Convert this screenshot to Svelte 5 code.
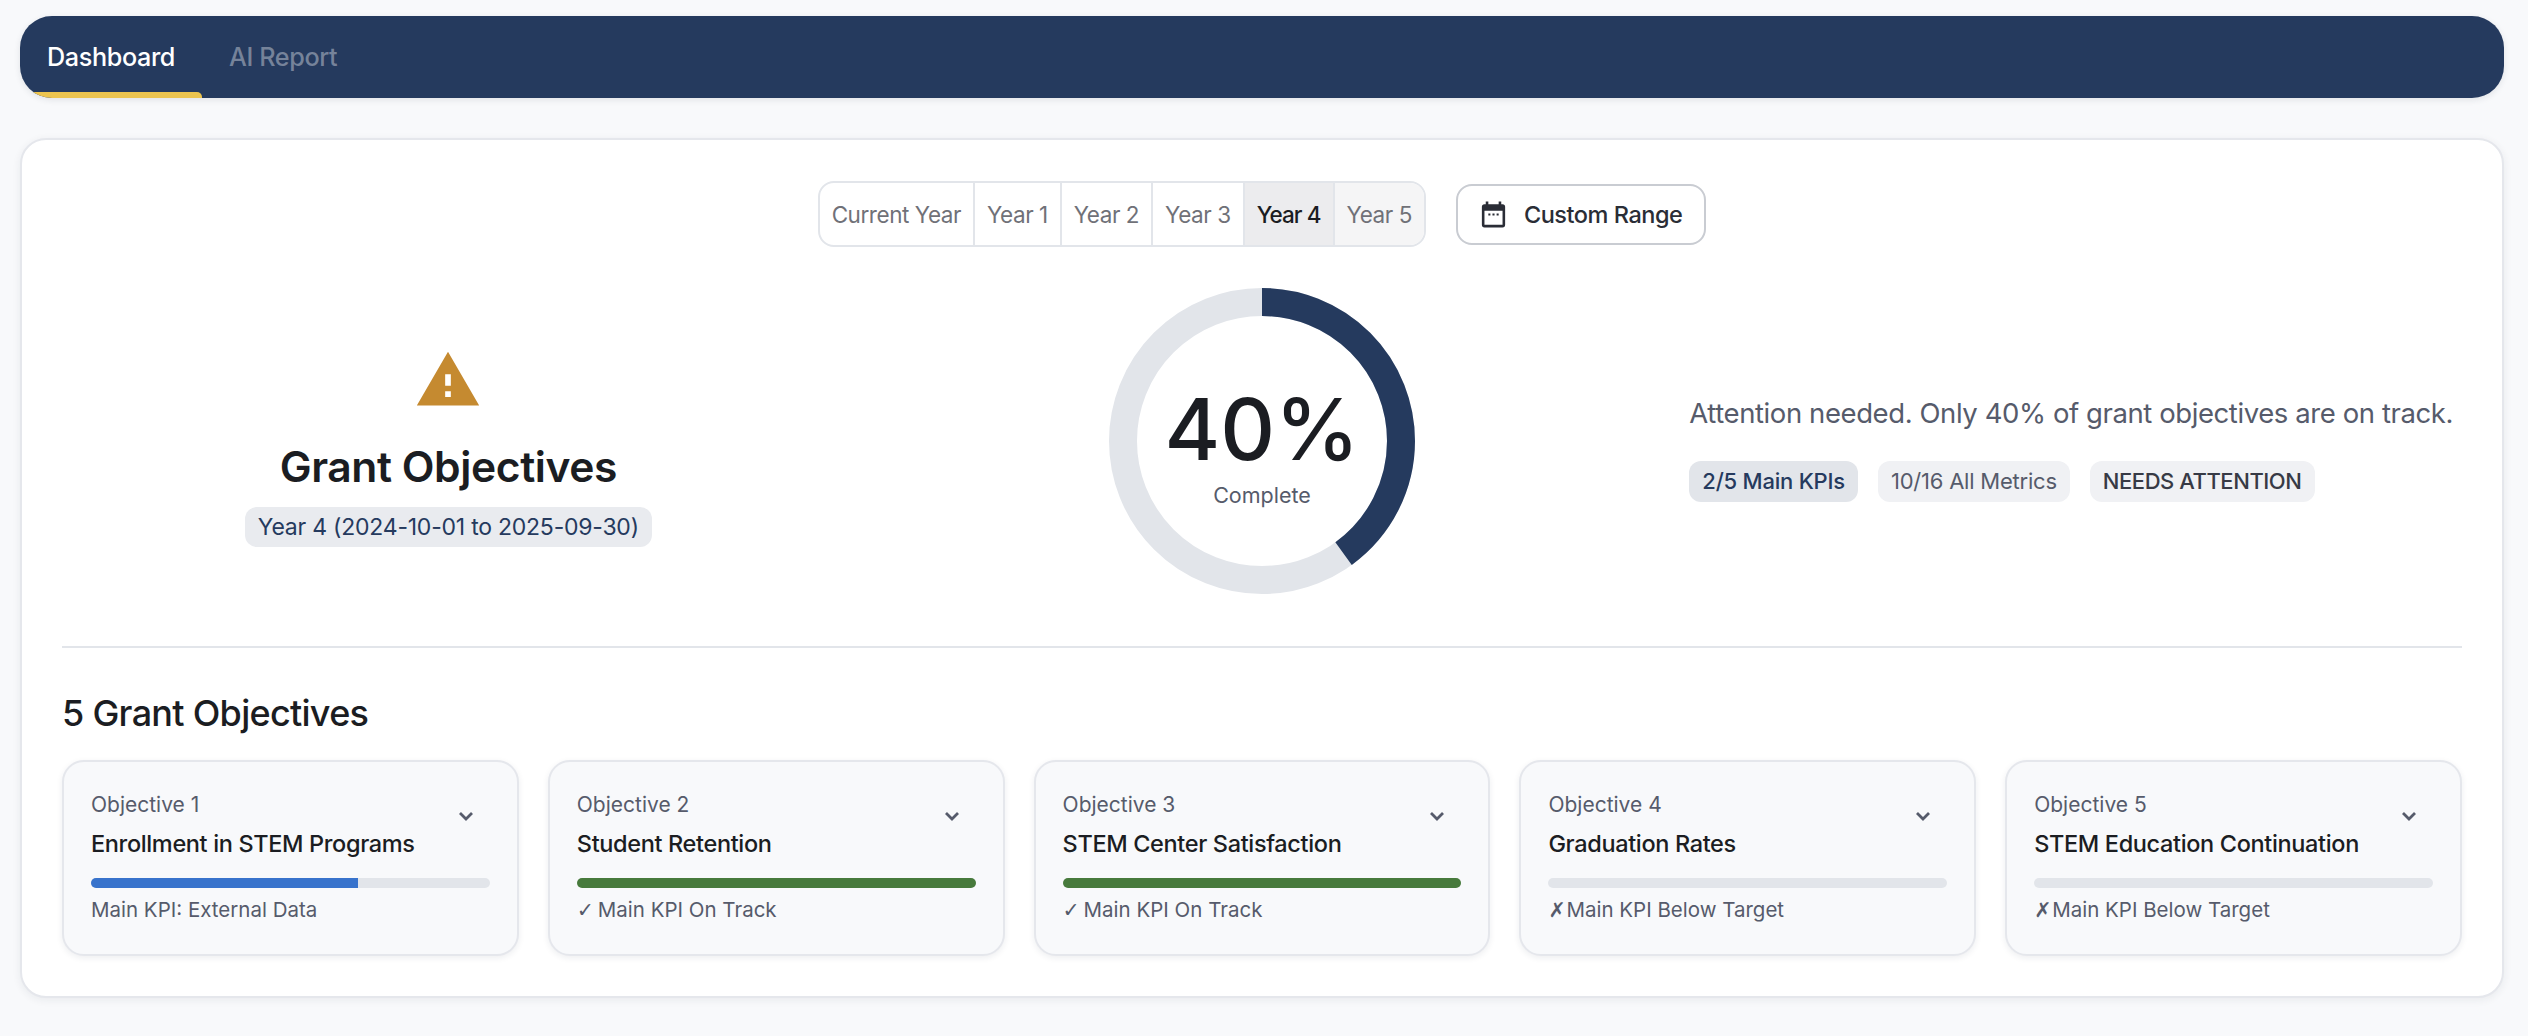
<script lang="ts">
	interface Objective {
		title: string;
		mark: string;
		status: string;
		color: string;
		pct: number;
	}

	const years = ['Current Year', 'Year 1', 'Year 2', 'Year 3', 'Year 4', 'Year 5'];
	const activeYear = 'Year 4';

	const objectives: Objective[] = [
		{ title: 'Enrollment in STEM Programs', mark: '', status: 'Main KPI: External Data', color: '#3873cc', pct: 67 },
		{ title: 'Student Retention', mark: '✓', status: 'Main KPI On Track', color: '#477a3c', pct: 100 },
		{ title: 'STEM Center Satisfaction', mark: '✓', status: 'Main KPI On Track', color: '#477a3c', pct: 100 },
		{ title: 'Graduation Rates', mark: '✗', status: 'Main KPI Below Target', color: '#477a3c', pct: 0 },
		{ title: 'STEM Education Continuation', mark: '✗', status: 'Main KPI Below Target', color: '#477a3c', pct: 0 }
	];

	const radius = 139;
	const circumference = 2 * Math.PI * radius;
	const percent = 40;
</script>

<div class="page">
	<nav class="topnav">
		<button class="tab active">Dashboard</button>
		<button class="tab">AI Report</button>
	</nav>

	<main class="panel">
		<div class="filters">
			<div class="segments">
				{#each years as year}
					<button
						class="segment"
						class:active={year === activeYear}
						class:tinted={year === 'Year 5'}
					>{year}</button>
				{/each}
			</div>
			<button class="range">
				<svg width="31" height="31" viewBox="0 0 24 24" fill="currentColor">
					<path d="M19 4h-1V2h-2v2H8V2H6v2H5a2 2 0 0 0-2 2v14a2 2 0 0 0 2 2h14a2 2 0 0 0 2-2V6a2 2 0 0 0-2-2zm0 16H5V9h14v11z" />
					<path d="M8 11.2h1.6v1.6H8zM11.2 11.2h1.6v1.6h-1.6zM14.4 11.2H16v1.6h-1.6z" />
				</svg>
				Custom Range
			</button>
		</div>

		<section class="hero">
			<div class="hero-left">
				<svg class="warn" width="68" height="68" viewBox="0 0 24 24" fill="#c58a30">
					<path d="M1 21h22L12 2 1 21zm12-3h-2v-2h2v2zm0-4h-2v-4h2v4z" />
				</svg>
				<h1>Grant Objectives</h1>
				<span class="period">Year 4 (2024-10-01 to 2025-09-30)</span>
			</div>

			<div class="ring">
				<svg width="306" height="306" viewBox="0 0 306 306">
					<circle cx="153" cy="153" r={radius} fill="none" stroke="#e2e5ea" stroke-width="28" />
					<circle
						cx="153"
						cy="153"
						r={radius}
						fill="none"
						stroke="#253a5e"
						stroke-width="28"
						stroke-dasharray="{circumference * percent / 100} {circumference}"
						transform="rotate(-90 153 153)"
					/>
				</svg>
				<div class="ring-label">
					<div class="value">{percent}%</div>
					<div class="caption">Complete</div>
				</div>
			</div>

			<div class="hero-right">
				<p>Attention needed. Only 40% of grant objectives are on track.</p>
				<div class="chips">
					<span class="chip kpi">2/5 Main KPIs</span>
					<span class="chip metrics">10/16 All Metrics</span>
					<span class="chip state">NEEDS ATTENTION</span>
				</div>
			</div>
		</section>

		<section class="objectives">
			<h2>5 Grant Objectives</h2>
			<div class="cards">
				{#each objectives as obj, i}
					<article class="card">
						<div class="card-head">
							<div>
								<div class="eyebrow">Objective {i + 1}</div>
								<div class="title">{obj.title}</div>
							</div>
							<svg class="chev" width="24" height="24" viewBox="0 0 24 24" fill="none" stroke="currentColor" stroke-width="2.8">
								<path d="M6 9l6 6 6-6" />
							</svg>
						</div>
						<div class="bar">
							<div class="fill" style="width: {obj.pct}%; background: {obj.color}"></div>
						</div>
						<div class="status">
							{#if obj.mark}<span class="mark" class:cross={obj.mark === '✗'}>{obj.mark}</span>{/if}{obj.status}
						</div>
					</article>
				{/each}
			</div>
		</section>
	</main>
</div>

<style>
	:global(body) {
		margin: 0;
		background: #f8f9fb;
		font-family: Inter, "Noto Sans", sans-serif;
		color: #1b1d22;
	}

	button {
		font: inherit;
		border: none;
		background: none;
		cursor: pointer;
	}

	.page {
		padding: 16px 24px 38px 20px;
	}

	.topnav {
		display: flex;
		height: 82px;
		background: #253a5e;
		border-radius: 32px;
		overflow: hidden;
		box-shadow: 0 2px 6px rgba(30, 40, 60, 0.1);
	}

	.tab {
		position: relative;
		padding: 0 27px;
		font-size: 25.2px;
		font-weight: 500;
		letter-spacing: -0.015em;
		color: rgba(255, 255, 255, 0.38);
	}

	.tab.active {
		color: #fff;
	}

	.tab.active::after {
		content: '';
		position: absolute;
		left: 0;
		right: 0;
		bottom: 0;
		height: 6px;
		background: #ecc44f;
		border-radius: 5px 5px 0 0;
	}

	.panel {
		margin-top: 40px;
		height: 860px;
		box-sizing: border-box;
		padding: 41px 40px 0;
		background: #fff;
		border: 2px solid #e5e7ec;
		border-radius: 26px;
		box-shadow: 0 2px 8px rgba(30, 40, 60, 0.07);
	}

	.filters {
		display: flex;
		justify-content: center;
		align-items: center;
		gap: 30px;
	}

	.segments {
		display: flex;
		height: 66px;
		box-sizing: border-box;
		border: 2px solid #e2e5ea;
		border-radius: 16px;
		overflow: hidden;
	}

	.segment {
		padding: 0 12px;
		font-size: 22.5px;
		letter-spacing: -0.02em;
		color: #707178;
		border-left: 2px solid #e2e5ea;
	}

	.segment:first-child {
		border-left: none;
	}

	.segment.active {
		background: #ececee;
		color: #1b1d22;
		font-weight: 500;
		letter-spacing: -0.04em;
	}

	.segment.tinted {
		background: #f5f5f6;
	}

	.range {
		display: flex;
		align-items: center;
		gap: 15px;
		height: 61px;
		box-sizing: border-box;
		padding: 0 22px 0 20px;
		font-size: 23.5px;
		font-weight: 500;
		letter-spacing: -0.02em;
		color: #2a2d36;
		border: 2px solid #c9ccd2;
		border-radius: 16px;
	}

	.hero {
		display: grid;
		grid-template-columns: 1fr 1fr 1fr;
		gap: 41px;
		align-items: center;
		margin-top: 41px;
		padding-bottom: 52px;
		border-bottom: 2px solid #e2e5ea;
	}

	.hero-left {
		display: flex;
		flex-direction: column;
		align-items: center;
		padding-top: 11px;
	}

	.warn {
		display: block;
	}

	h1 {
		margin: 27px 0 14px;
		font-size: 42.6px;
		line-height: 52px;
		font-weight: 600;
		letter-spacing: -0.01em;
	}

	.period {
		padding: 0 13px;
		height: 40px;
		line-height: 40px;
		font-size: 23px;
		letter-spacing: -0.01em;
		color: #253a5e;
		background: #e9ebef;
		border-radius: 12px;
	}

	.ring {
		position: relative;
		justify-self: center;
		width: 306px;
		height: 306px;
	}

	.ring svg {
		display: block;
	}

	.ring-label {
		position: absolute;
		inset: 0;
		display: flex;
		flex-direction: column;
		align-items: center;
		justify-content: center;
	}

	.value {
		margin-top: 9px;
		font-size: 85px;
		line-height: 96px;
		font-weight: 550;
		color: #1b1d22;
	}

	.caption {
		margin-top: 3px;
		font-size: 21.5px;
		line-height: 28px;
		color: #565b6b;
	}

	.hero-right {
		padding-top: 13px;
	}

	.hero-right p {
		margin: 0 0 28px;
		font-size: 27.5px;
		line-height: 40px;
		letter-spacing: -0.015em;
		white-space: nowrap;
		color: #565b6b;
	}

	.chips {
		display: flex;
		gap: 20px;
	}

	.chip {
		height: 41px;
		line-height: 41px;
		padding: 0 13px;
		font-size: 22px;
		letter-spacing: -0.01em;
		border-radius: 12px;
		background: #f0f1f4;
	}

	.chip.kpi {
		background: #e2e5ea;
		color: #253a5e;
		font-weight: 500;
	}

	.chip.metrics {
		color: #565b6b;
	}

	.chip.state {
		color: #373a45;
		font-weight: 500;
		letter-spacing: -0.02em;
	}

	h2 {
		margin: 43px 0 0;
		font-size: 36px;
		line-height: 44px;
		font-weight: 500;
		letter-spacing: -0.02em;
	}

	.cards {
		display: grid;
		grid-template-columns: repeat(5, 1fr);
		gap: 29px;
		margin-top: 25px;
	}

	.card {
		height: 196px;
		box-sizing: border-box;
		padding: 28px 27px 0;
		background: #f8f9fb;
		border: 2px solid #e5e7ec;
		border-radius: 22px;
		box-shadow: 0 2px 6px rgba(30, 40, 60, 0.08);
	}

	.card-head {
		display: flex;
		justify-content: space-between;
		align-items: center;
	}

	.eyebrow {
		font-size: 21px;
		line-height: 30px;
		color: #565b6b;
	}

	.title {
		margin-top: 8px;
		font-size: 23.5px;
		line-height: 32px;
		font-weight: 500;
		letter-spacing: -0.015em;
		color: #1b1d22;
	}

	.chev {
		color: #565b6b;
		margin-right: 12px;
		margin-top: -18px;
	}

	.bar {
		margin-top: 18px;
		height: 10px;
		background: #e2e5ea;
		border-radius: 5px;
		overflow: hidden;
	}

	.fill {
		height: 100%;
	}

	.status {
		margin-top: 8px;
		font-size: 20.5px;
		line-height: 28px;
		color: #565b6b;
	}

	.mark {
		display: inline-block;
		width: 21px;
		font-family: "DejaVu Sans", sans-serif;
	}

	.mark.cross {
		width: 18px;
	}
</style>
